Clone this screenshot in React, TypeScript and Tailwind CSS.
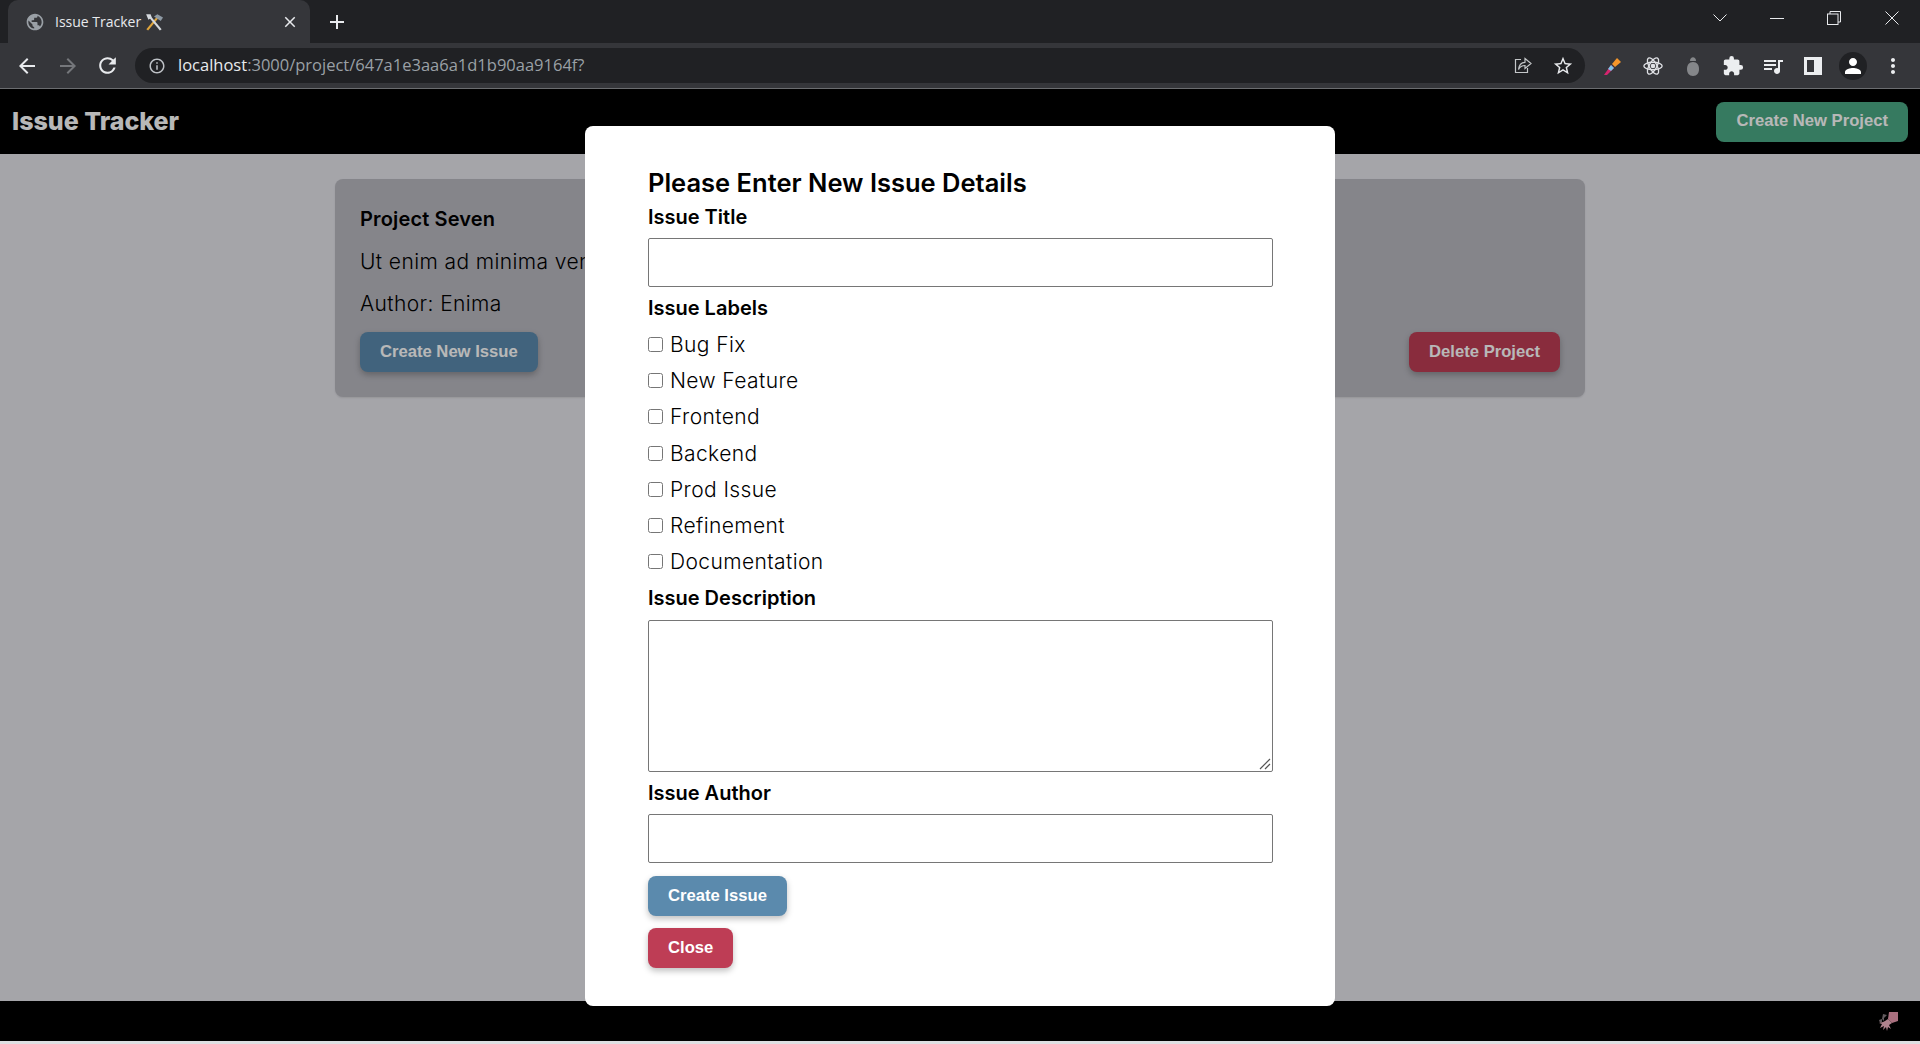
import {
  MdAdd,
  MdArrowBack,
  MdArrowForward,
  MdClose,
  MdExtension,
  MdInfoOutline,
  MdMoreVert,
  MdPerson,
  MdPublic,
  MdQueueMusic,
  MdRefresh,
  MdStarBorder,
} from "react-icons/md";

const LABELS = ["Bug Fix", "New Feature", "Frontend", "Backend", "Prod Issue", "Refinement", "Documentation"];

const poppins = "font-['Inter','Noto_Sans',sans-serif]";
const arial = "font-['Liberation_Sans',Arial,sans-serif]";
const bodyText = `${poppins} text-[21px] font-light tracking-[0.4px] text-black`;

function TabStrip() {
  return (
    <div className="flex h-[43px] items-end bg-[#202124] pl-2">
      <div className="relative flex h-[43px] w-[302px] items-center rounded-t-[10px] bg-[#35363a] pl-[17px] pr-[11px]">
        <MdPublic className="h-[20px] w-[20px] text-[#9aa0a6]" />
        <span className="ml-[10px] flex items-center gap-[4px] font-['Open_Sans',sans-serif] text-[14px] text-[#e8eaed]">
          Issue Tracker
          <svg viewBox="0 0 16 16" className="h-[18px] w-[18px]">
            <path d="M2 15 12 3" stroke="#e0a63c" strokeWidth="2" />
            <path d="M14 15 4 3" stroke="#d5d9dd" strokeWidth="2" />
            <path d="M8 3l3-2 5 3-2 3z" fill="#8d99a3" />
            <path d="M1 1l4 0 1 3-3 2z" fill="#d5d9dd" />
          </svg>
        </span>
        <MdClose className="ml-auto h-[18px] w-[18px] text-[#e8eaed]" />
      </div>
      <MdAdd className="mb-[9px] ml-[15px] h-[24px] w-[24px] text-[#e8eaed]" />
      <div className="ml-auto mb-[18px] flex items-center pr-[21px] text-[#e8eaed]">
        <svg viewBox="0 0 14 8" className="mr-[43px] h-[8px] w-[14px]" fill="none" stroke="currentColor">
          <path d="M.5.5 7 7l6.5-6.5" />
        </svg>
        <span className="mr-[43px] h-px w-[14px] bg-current" />
        <svg viewBox="0 0 14 14" className="mr-[44px] h-[14px] w-[14px]" fill="none" stroke="currentColor">
          <rect x=".5" y="3" width="10.5" height="10.5" />
          <path d="M3 3V.5h10.5V11H11" />
        </svg>
        <svg viewBox="0 0 14 14" className="h-[14px] w-[14px]" fill="none" stroke="currentColor">
          <path d="M.5.5l13 13M13.5.5l-13 13" />
        </svg>
      </div>
    </div>
  );
}

function Toolbar() {
  return (
    <div className="flex h-[46px] items-center border-b border-[#6b6d70] bg-[#35363a] pl-[15px]">
      <MdArrowBack className="h-[24px] w-[24px] text-[#e8eaed]" />
      <MdArrowForward className="ml-[17px] h-[24px] w-[24px] text-[#75777b]" />
      <MdRefresh className="ml-[15px] h-[25px] w-[25px] text-[#e8eaed]" />
      <div className="ml-[15px] flex h-[35px] w-[1450px] items-center rounded-full bg-[#202124] pl-[13px] pr-[11px]">
        <MdInfoOutline className="h-[18px] w-[18px] text-[#bdc1c6]" />
        <span className="ml-[12px] font-['Open_Sans',sans-serif] text-[16.5px] text-[#9aa0a6]">
          <span className="text-[#e8eaed]">localhost</span>:3000/project/647a1e3aa6a1d1b90aa9164f?
        </span>
        <svg viewBox="0 0 20 20" className="ml-auto h-[20px] w-[20px]" fill="none" stroke="#c4c7c9" strokeWidth="1.2">
          <path d="M8 3.5H2.5v13h12V12" />
          <path d="M12 2.5 18 7.5l-6 5V9.5c-3 0-5 1-6.5 4 .5-4.500 3-7 6.500-7.200z" />
        </svg>
        <MdStarBorder className="ml-[19px] h-[22px] w-[22px] text-[#e8eaed]" />
      </div>
      <div className="ml-[8px] grid grid-cols-[repeat(8,40px)] items-center justify-items-center">
        <svg viewBox="0 0 20 20" className="h-[20px] w-[20px]">
          <path d="M1 19 8 9l3 3-7 7z" fill="#d6246e" />
          <path d="M5 13 8 9l3 3-3 3z" fill="#7dc4e8" />
          <path d="M9 8l5-6 4 4-6 5z" fill="#f5962a" />
        </svg>
        <svg viewBox="0 0 24 24" className="h-[20px] w-[20px]" fill="none" stroke="#dfe1e5" strokeWidth="1.6">
          <ellipse cx="12" cy="12" rx="11" ry="4.500" />
          <ellipse cx="12" cy="12" rx="11" ry="4.500" transform="rotate(60 12 12)" />
          <ellipse cx="12" cy="12" rx="11" ry="4.500" transform="rotate(120 12 12)" />
          <circle cx="12" cy="12" r="2" fill="#dfe1e5" />
        </svg>
        <svg viewBox="0 0 12 20" className="h-[20px] w-[12px]" fill="#85878a">
          <path d="M3 5c0-5 6-5 6 0z" />
          <path d="M6 6c4 0 6 3 6 7s-2 7-6 7-6-3-6-7 2-7 6-7z" />
        </svg>
        <MdExtension className="h-[22px] w-[22px] text-[#eceef0]" />
        <MdQueueMusic className="h-[24px] w-[24px] text-[#eceef0]" />
        <svg viewBox="0 0 18 18" className="h-[18px] w-[18px]">
          <path d="M0 0h18v18H0z" fill="#eceef0" />
          <path d="M3 3h7v12H3z" fill="#35363a" />
        </svg>
        <span className="flex h-[28px] w-[28px] items-center justify-center rounded-full bg-[#202124]">
          <MdPerson className="h-[24px] w-[24px] text-white" />
        </span>
        <MdMoreVert className="h-[24px] w-[24px] text-[#eceef0]" />
      </div>
    </div>
  );
}

function Squid() {
  return (
    <svg viewBox="0 0 20 20" className="h-[20px] w-[20px]">
      <path d="M11 1h9v9l-6 2-4-4z" fill="#ec9cb0" />
      <path d="M5 3l4 1-3 3 0 3-2-2zM1 9l3-1 0 3-2 1z" fill="#8a7f84" />
      <path
        d="M10 8l4 4-3 2 2 4-3-2-1 4-1-4-3 3 1-4-4 2 2-4-3-1 4-1 2-1z"
        fill="#f4b4c4"
      />
    </svg>
  );
}

function Modal() {
  const labelCls = `${poppins} text-[20px] font-semibold leading-[24px] text-black`;
  const inputCls = "block h-[49px] w-[625px] rounded-[2px] border border-[#767676] bg-white";
  const btnCls = `${arial} block h-[40px] rounded-[8px] px-[20px] text-[16.64px] font-bold text-white shadow-[0_3px_6px_rgba(0,0,0,0.25)]`;

  return (
    <div className="mt-[37px] h-[880px] w-[750px] rounded-[8px] bg-white pl-[63px] pr-[62px] pt-[42px]">
      <h2 className={`${poppins} text-[25.5px] font-semibold leading-[29px] text-black`}>Please Enter New Issue Details</h2>
      <label className={`mt-[8px] block ${labelCls}`}>Issue Title</label>
      <input type="text" className={`mt-[9px] ${inputCls}`} />
      <label className={`mt-[9px] block ${labelCls}`}>Issue Labels</label>
      <div className="mt-[7px] flex flex-col">
        {LABELS.map((l) => (
          <label key={l} className="flex h-[36.2px] items-center gap-[7px]">
            <input type="checkbox" className="mb-[1px] h-[15px] w-[15px]" />
            <span className={`${bodyText} leading-[24px]`}>{l}</span>
          </label>
        ))}
      </div>
      <label className={`mt-[6px] block ${labelCls}`}>Issue Description</label>
      <div className="relative mt-[10px] h-[152px] w-[625px]">
        <textarea className="block h-full w-full resize-none rounded-[2px] border border-[#767676] bg-white" />
        <svg viewBox="0 0 12 12" className="absolute bottom-[2px] right-[2px] h-[12px] w-[12px]" stroke="#555" strokeWidth="1.2">
          <path d="M1 11 11 1M6 11l5-5" />
        </svg>
      </div>
      <label className={`mt-[9px] block ${labelCls}`}>Issue Author</label>
      <input type="text" className={`mt-[9px] ${inputCls}`} />
      <button className={`mt-[13px] bg-[#5b8aad] ${btnCls}`}>Create Issue</button>
      <button className={`mt-[12px] bg-[#be3d55] ${btnCls}`}>Close</button>
    </div>
  );
}

export default function App() {
  const btnCls = `${arial} h-[40px] rounded-[8px] px-[20px] text-[16.64px] font-bold text-white`;

  return (
    <div className="relative flex h-[1044px] w-[1920px] flex-col overflow-hidden bg-[#dfdfe2]">
      <TabStrip />
      <Toolbar />

      <header className="flex h-[65px] items-center justify-between bg-black pl-[12px] pr-[12px]">
        <span className={`${poppins} text-[25px] font-extrabold text-white`}>Issue Tracker</span>
        <button className={`bg-[#4ca985] ${btnCls}`}>Create New Project</button>
      </header>

      <main className="h-[847px] bg-[#e5e5eb] pl-[335px] pt-[25px]">
        <div className="h-[218px] w-[1250px] rounded-[8px] bg-[#b9b9c0] p-[25px] shadow-[0_1px_2px_rgba(0,0,0,0.1)]">
          <h3 className={`${poppins} text-[20px] font-semibold leading-[30px] tracking-[0.15px] text-black`}>Project Seven</h3>
          <p className={`${bodyText} mt-[13px] leading-[30px]`}>Ut enim ad minima veniam, quis nostrum exercitationem</p>
          <p className={`${bodyText} mt-[12px] leading-[30px]`}>Author: Enima</p>
          <div className="mt-[13px] flex justify-between">
            <button className={`bg-[#5b8aad] shadow-[0_3px_6px_rgba(0,0,0,0.25)] ${btnCls}`}>Create New Issue</button>
            <button className={`bg-[#be3d55] shadow-[0_3px_6px_rgba(0,0,0,0.25)] ${btnCls}`}>Delete Project</button>
          </div>
        </div>
      </main>

      <footer className="flex h-[40px] items-center justify-end bg-black pr-[22px]">
        <Squid />
      </footer>

      {/* scrim stops at the page edge, the browser chrome stays bright */}
      <div className="absolute inset-x-0 bottom-[3px] top-[89px] flex justify-center bg-black/[0.28]">
        <Modal />
      </div>
    </div>
  );
}
